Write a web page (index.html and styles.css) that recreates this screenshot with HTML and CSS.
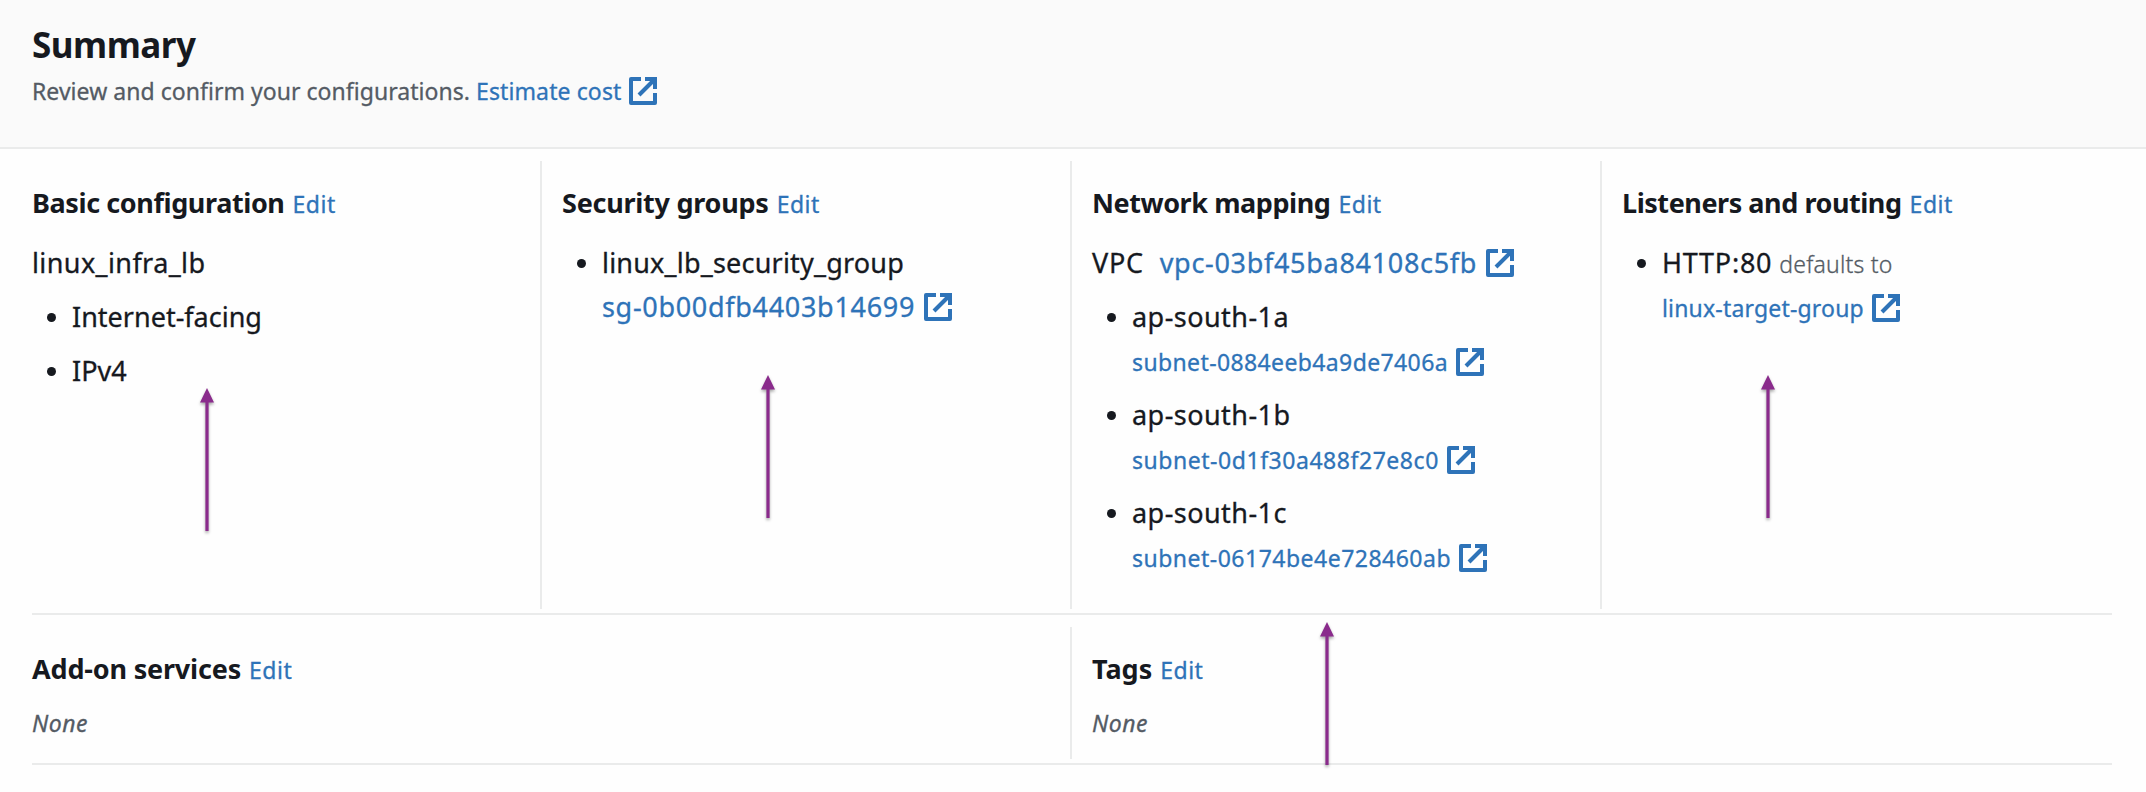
FILE: index.html
```html
<!DOCTYPE html>
<html lang="en">
<head>
<meta charset="utf-8">
<title>Summary</title>
<link rel="stylesheet" href="styles.css">
</head>
<body>
<svg class="defs" aria-hidden="true">
  <symbol id="external" viewBox="1 1 14 14">
    <g fill="none" stroke="currentColor" stroke-width="2">
      <path d="M9 2h5v5"/>
      <path d="M6 10l8-8"/>
      <path stroke-linejoin="round" d="M14 9v5H2V2h5"/>
    </g>
    <path fill="currentColor" d="M10.5 2H14v3.5z"/>
  </symbol>
  <symbol id="arrow" viewBox="0 0 14 143">
    <path d="M7 0l7 14.5H8.6V143H5.4V14.5H0z"/>
  </symbol>
</svg>

<header class="header">
  <h2 class="header-title">Summary</h2>
  <p class="header-text"><span class="review">Review and confirm your configurations.</span><a class="link estimate">Estimate cost</a><svg class="icon low"><use href="#external"/></svg></p>
</header>

<main class="grid">
  <div class="row row-four">
    <section class="cell">
      <h3 class="title"><span class="t-basic">Basic configuration</span><a class="edit">Edit</a></h3>
      <p class="line"><span class="n-lb">linux_infra_lb</span></p>
      <ul class="list">
        <li class="item"><p class="line">Internet-facing</p></li>
        <li class="item"><p class="line"><span class="n-ip">IPv4</span></p></li>
      </ul>
    </section>
    <section class="cell divided">
      <h3 class="title"><span class="t-security">Security groups</span><a class="edit">Edit</a></h3>
      <ul class="list">
        <li class="item">
          <p class="line"><span class="n-group">linux_lb_security_group</span></p>
          <p class="line"><a class="link ident">sg-0b00dfb4403b14699</a><svg class="icon"><use href="#external"/></svg></p>
        </li>
      </ul>
    </section>
    <section class="cell divided">
      <h3 class="title"><span class="t-network">Network mapping</span><a class="edit">Edit</a></h3>
      <p class="line"><span class="n-vpc">VPC</span><a class="link ident">vpc-03bf45ba84108c5fb</a><svg class="icon"><use href="#external"/></svg></p>
      <ul class="list">
        <li class="item">
          <p class="line"><span class="n-zone">ap-south-1a</span></p>
          <p class="line"><a class="link small s-a">subnet-0884eeb4a9de7406a</a><svg class="icon low"><use href="#external"/></svg></p>
        </li>
        <li class="item">
          <p class="line"><span class="n-zone">ap-south-1b</span></p>
          <p class="line"><a class="link small s-b">subnet-0d1f30a488f27e8c0</a><svg class="icon low"><use href="#external"/></svg></p>
        </li>
        <li class="item">
          <p class="line"><span class="n-zone">ap-south-1c</span></p>
          <p class="line"><a class="link small s-c">subnet-06174be4e728460ab</a><svg class="icon low"><use href="#external"/></svg></p>
        </li>
      </ul>
    </section>
    <section class="cell divided">
      <h3 class="title"><span class="t-listeners">Listeners and routing</span><a class="edit">Edit</a></h3>
      <ul class="list">
        <li class="item">
          <p class="line"><span class="n-http">HTTP:80</span><span class="defaults">defaults to</span></p>
          <p class="line"><a class="link small s-target">linux-target-group</a><svg class="icon low"><use href="#external"/></svg></p>
        </li>
      </ul>
    </section>
  </div>
  <div class="row row-two">
    <section class="cell">
      <h3 class="title"><span class="t-addon">Add-on services</span><a class="edit">Edit</a></h3>
      <p class="none">None</p>
    </section>
    <section class="cell divided">
      <h3 class="title"><span>Tags</span><a class="edit">Edit</a></h3>
      <p class="none">None</p>
    </section>
  </div>
</main>

<svg class="arrow arrow-basic"><use href="#arrow"/></svg>
<svg class="arrow arrow-security"><use href="#arrow"/></svg>
<svg class="arrow arrow-network"><use href="#arrow"/></svg>
<svg class="arrow arrow-listeners"><use href="#arrow"/></svg>
</body>
</html>
```
FILE: styles.css
```css
* { box-sizing: border-box; margin: 0; padding: 0; }

body {
  position: relative;
  height: 792px;
  overflow: hidden;
  background: #fefefe;
  color: #16191f;
  font-family: "Noto Sans", "Open Sans", sans-serif;
  font-size: 27px;
  line-height: 44px;
  white-space: nowrap;
}

.defs { display: block; width: 0; height: 0; }

/* Header */
.header {
  height: 149px;
  padding: 22px 32px 0;
  background: #fafafa;
  border-bottom: 2px solid #eaebeb;
}
.header-title { height: 45px; font-size: 35px; line-height: 45px; letter-spacing: -0.5px; }
.header-text { height: 32px; margin-top: 8px; font-size: 23px; line-height: 32px; color: #545b64; }
.review { letter-spacing: 0.04px; }
.estimate { margin-left: 6px; letter-spacing: 0.11px; }
.header-text, .line, .edit, .none { -webkit-text-stroke: 0.3px currentColor; }

/* Configuration grid */
.grid { margin: 0 34px 0 32px; }
.row { display: grid; padding: 12px 0 4px; border-bottom: 2px solid #eaebeb; }
.row-four { grid-template-columns: 508px 530px 530px 1fr; height: 466px; }
.row-two { grid-template-columns: 1038px 1fr; height: 150px; }
.cell { padding-top: 20px; }
.divided { padding-left: 20px; border-left: 2px solid #eaebeb; }

.title { height: 44px; margin-bottom: 16px; font-size: 27px; font-weight: 700; }
.edit {
  margin-left: 8px;
  color: #2e73b8;
  font-size: 23px;
  font-weight: 400;
  line-height: 1;
  letter-spacing: 0.5px;
}
.t-basic { letter-spacing: -0.4px; }
.t-security { letter-spacing: -0.25px; }
.t-network { letter-spacing: -0.43px; }
.t-listeners { letter-spacing: -0.45px; }
.t-addon { letter-spacing: -0.18px; }

.line { height: 44px; }
.line + .list { margin-top: 10px; }
.list { list-style: none; padding-left: 40px; }
.item { position: relative; }
.item + .item { margin-top: 10px; }
.item::before {
  content: "";
  position: absolute;
  left: -25px;
  top: 18px;
  width: 9px;
  height: 9px;
  border-radius: 50%;
  background: #16191f;
}

.n-lb { letter-spacing: 0.4px; }
.n-ip { letter-spacing: 0; }
.n-group { letter-spacing: 0.2px; }
.n-vpc { margin-right: 16px; letter-spacing: 0.7px; }
.n-zone { letter-spacing: 0.45px; }
.n-http { letter-spacing: 0.75px; }

.link { color: #2e73b8; }
.ident { letter-spacing: 0.69px; }
.ident + .icon { margin-left: 9px; }
.small { font-size: 23px; line-height: 1; }
.s-a { letter-spacing: 0.38px; }
.s-b { letter-spacing: 0.54px; }
.s-c { letter-spacing: 0.49px; }
.s-target { letter-spacing: 0.18px; }
.defaults {
  margin-left: 7px;
  color: #545b64;
  font-size: 23px;
  font-weight: 300;
  line-height: 1;
  letter-spacing: 0.2px;
}
.none {
  height: 32px;
  color: #545b64;
  font-size: 23px;
  font-style: italic;
  line-height: 32px;
  letter-spacing: 0.5px;
}

.icon { width: 28px; height: 28px; margin-left: 8px; color: #2e73b8; vertical-align: -4px; }
.low { vertical-align: -5px; }

/* Callout arrows over the grid */
.arrow {
  position: absolute;
  width: 14px;
  height: 143px;
  fill: #8a2b8c;
  overflow: visible;
  filter: drop-shadow(0 2px 1.5px rgba(0, 0, 0, 0.35));
}
.arrow-basic { left: 200px; top: 388px; }
.arrow-security { left: 760.5px; top: 375px; }
.arrow-network { left: 1319.5px; top: 622px; }
.arrow-listeners { left: 1760.5px; top: 375px; }
```
